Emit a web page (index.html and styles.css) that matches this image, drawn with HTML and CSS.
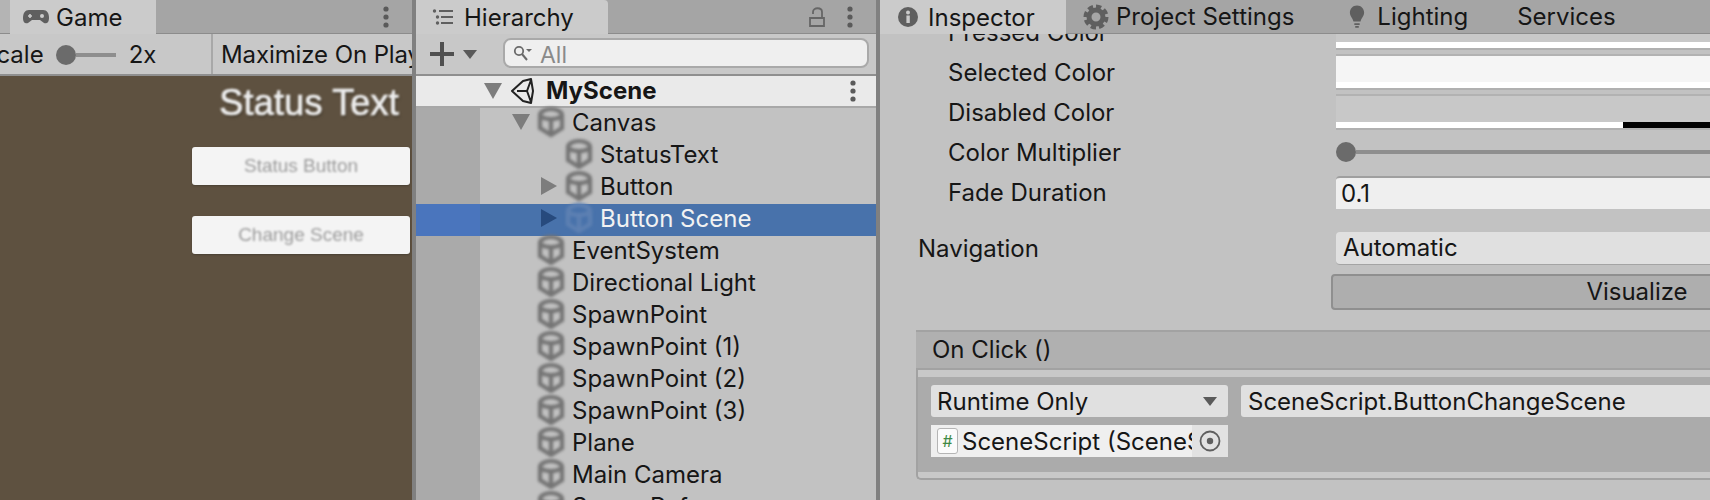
FILE: index.html
```html
<!DOCTYPE html>
<html lang="en">
<head>
    <meta charset="UTF-8">
    <title>Unity Editor</title>
    <link rel="stylesheet" href="styles.css">
</head>
<body>
    <svg class="sprites" width="0" height="0">
        <symbol id="cube" viewBox="0 0 28 32">
            <path d="M14 3 C20 3 25 6 25 9 V22 L14 29 L3 22 V9 C3 6 8 3 14 3 Z M3 10 C8 14 20 14 25 10 M14 13 V29" fill="none" stroke="currentColor" stroke-width="4.2"/>
        </symbol>
        <symbol id="kebab" viewBox="0 0 8 24">
            <circle cx="4" cy="4" r="2.6"/>
            <circle cx="4" cy="12" r="2.6"/>
            <circle cx="4" cy="20" r="2.6"/>
        </symbol>
    </svg>

    <!-- game view -->
    <section class="panel game">
        <div class="tabbar">
            <div class="tab-stub"></div>
            <div class="tab game-tab">
                <svg class="tab-icon" width="28" height="16" viewBox="0 0 28 16">
                    <path d="M7 1 H21 C25 1 27 4 27 9 C27 14 24 15 22 14 L18 11 H10 L6 14 C4 15 1 14 1 9 C1 4 3 1 7 1 Z" fill="#5f5f5f"/>
                    <path d="M6 7 H10 M8 5 V9" stroke="#cbcbcb" stroke-width="1.6"/>
                    <circle cx="20" cy="7" r="2" fill="#cbcbcb"/>
                </svg>
                Game
            </div>
            <div class="tabbar-tools">
                <svg class="kebab" width="8" height="24"><use href="#kebab"/></svg>
            </div>
        </div>
        <div class="toolbar game-toolbar">
            <div class="scale-group">
                <span class="scale-label">Scale</span>
                <div class="slider scale-slider"><span class="knob"></span><span class="track"></span></div>
                <span>2x</span>
            </div>
            <div class="maximize">Maximize On Play</div>
        </div>
        <div class="game-view">
            <div class="status-text">Status Text</div>
            <div class="game-button"><span class="game-button-text">Status Button</span></div>
            <div class="game-button"><span class="game-button-text">Change Scene</span></div>
        </div>
    </section>

    <!-- hierarchy -->
    <section class="panel hierarchy">
        <div class="tabbar">
            <div class="tab hierarchy-tab">
                <svg class="tab-icon" width="22" height="18" viewBox="0 0 22 18">
                    <path d="M7 3 H21 M9 9 H21 M9 15 H21" stroke="#5f5f5f" stroke-width="2"/>
                    <circle cx="2.5" cy="3" r="1.7" fill="#5f5f5f"/>
                    <circle cx="5.5" cy="9" r="1.7" fill="#5f5f5f"/>
                    <circle cx="5.5" cy="15" r="1.7" fill="#5f5f5f"/>
                </svg>
                Hierarchy
            </div>
            <div class="tabbar-tools">
                <svg class="lock" width="16" height="20" viewBox="0 0 16 20">
                    <path d="M1 11 H15 V19 H1 Z M4 7 V5 C4 0 13 0 13 5 V11" fill="none" stroke="#666666" stroke-width="1.8"/>
                </svg>
                <svg class="kebab" width="8" height="24"><use href="#kebab"/></svg>
            </div>
        </div>
        <div class="toolbar hierarchy-toolbar">
            <svg class="plus" width="24" height="24" viewBox="0 0 24 24">
                <path d="M0 12 H24 M12 0 V24" stroke="#505050" stroke-width="4"/>
            </svg>
            <span class="caret big-caret"></span>
            <div class="search">
                <svg width="20" height="16" viewBox="0 0 20 16">
                    <circle cx="6" cy="6" r="4.2" fill="none" stroke="#6a6a6a" stroke-width="1.8"/>
                    <path d="M9 9 L14 15" stroke="#6a6a6a" stroke-width="2"/>
                    <path d="M13 4 H19 L16 7 Z" fill="#6a6a6a"/>
                </svg>
                <span class="search-text">All</span>
            </div>
        </div>
        <div class="tree">
            <div class="row scene-row">
                <span class="arrow down"></span>
                <svg class="scene-icon" width="24" height="26" viewBox="0 0 24 26">
                    <path d="M2 13 L13 3 L21 1 L23 13 L21 25 L13 23 Z M7 13 H17 L21 2 M17 13 L21 24" fill="none" stroke="#222" stroke-width="2" stroke-linejoin="round"/>
                </svg>
                <span class="scene-name">MyScene</span>
                <svg class="kebab scene-kebab" width="8" height="24"><use href="#kebab"/></svg>
            </div>
            <div class="row d1"><span class="arrow down"></span><svg class="cube"><use href="#cube"/></svg>Canvas</div>
            <div class="row d2"><span class="arrow"></span><svg class="cube"><use href="#cube"/></svg>StatusText</div>
            <div class="row d2"><span class="arrow right"></span><svg class="cube"><use href="#cube"/></svg>Button</div>
            <div class="row d2 selected"><span class="arrow right"></span><svg class="cube"><use href="#cube"/></svg>Button Scene</div>
            <div class="row d1"><span class="arrow"></span><svg class="cube"><use href="#cube"/></svg>EventSystem</div>
            <div class="row d1"><span class="arrow"></span><svg class="cube"><use href="#cube"/></svg>Directional Light</div>
            <div class="row d1"><span class="arrow"></span><svg class="cube"><use href="#cube"/></svg>SpawnPoint</div>
            <div class="row d1"><span class="arrow"></span><svg class="cube"><use href="#cube"/></svg>SpawnPoint (1)</div>
            <div class="row d1"><span class="arrow"></span><svg class="cube"><use href="#cube"/></svg>SpawnPoint (2)</div>
            <div class="row d1"><span class="arrow"></span><svg class="cube"><use href="#cube"/></svg>SpawnPoint (3)</div>
            <div class="row d1"><span class="arrow"></span><svg class="cube"><use href="#cube"/></svg>Plane</div>
            <div class="row d1"><span class="arrow"></span><svg class="cube"><use href="#cube"/></svg>Main Camera</div>
            <div class="row d1"><span class="arrow"></span><svg class="cube"><use href="#cube"/></svg>Scene Ref</div>
        </div>
    </section>

    <!-- inspector -->
    <section class="panel inspector">
        <div class="tabbar">
            <div class="tab inspector-tab">
                <svg class="tab-icon" width="20" height="20" viewBox="0 0 20 20">
                    <circle cx="10" cy="10" r="10" fill="#5f5f5f"/>
                    <rect x="8.4" y="8.5" width="3.4" height="7.5" fill="#cbcbcb"/>
                    <circle cx="10" cy="5.4" r="2" fill="#cbcbcb"/>
                </svg>
                Inspector
            </div>
            <div class="plain-tab settings-tab">
                <svg class="tab-icon" width="26" height="26" viewBox="0 0 26 26">
                    <circle cx="13" cy="13" r="7" fill="none" stroke="#5f5f5f" stroke-width="5"/>
                    <circle cx="13" cy="13" r="10.5" fill="none" stroke="#5f5f5f" stroke-width="4" stroke-dasharray="5.2 3"/>
                </svg>
                Project Settings
            </div>
            <div class="plain-tab lighting-tab">
                <svg class="tab-icon" width="16" height="26" viewBox="0 0 18 26">
                    <path d="M9 0 C14 0 17 4 17 8 C17 12 14 14 13 18 H5 C4 14 1 12 1 8 C1 4 4 0 9 0 Z" fill="#5f5f5f"/>
                    <path d="M6 21 H12 M7 24 H11" stroke="#5f5f5f" stroke-width="2"/>
                </svg>
                Lighting
            </div>
            <div class="plain-tab services-tab">Services</div>
        </div>
        <div class="inspector-body">
            <div class="props">
                <div class="prop">
                    <div class="prop-label">Pressed Color</div>
                    <div class="swatch swatch-pressed"></div>
                </div>
                <div class="prop">
                    <div class="prop-label">Selected Color</div>
                    <div class="swatch swatch-selected"></div>
                </div>
                <div class="prop">
                    <div class="prop-label">Disabled Color</div>
                    <div class="swatch swatch-disabled"></div>
                </div>
                <div class="prop">
                    <div class="prop-label">Color Multiplier</div>
                    <div class="slider"><span class="knob"></span><span class="track"></span></div>
                </div>
                <div class="prop">
                    <div class="prop-label">Fade Duration</div>
                    <div class="number-field">0.1</div>
                </div>
            </div>
            <div class="nav-row">
                <div class="nav-label">Navigation</div>
                <div class="dropdown nav-dropdown">Automatic</div>
            </div>
            <div class="visualize">Visualize</div>
            <div class="event">
                <div class="event-head">On Click ()</div>
                <div class="event-body">
                    <div class="event-rows">
                        <div class="event-line">
                            <div class="dropdown runtime">Runtime Only<span class="caret"></span></div>
                            <div class="dropdown method">SceneScript.ButtonChangeScene</div>
                        </div>
                        <div class="object-field">
                            <span class="script-icon">#</span>
                            <span class="object-name">SceneScript (SceneScript)</span>
                            <span class="object-pick">
                                <svg width="22" height="22" viewBox="0 0 22 22">
                                    <circle cx="11" cy="11" r="9.5" fill="none" stroke="#5f5f5f" stroke-width="1.8"/>
                                    <circle cx="11" cy="11" r="3.2" fill="#5f5f5f"/>
                                </svg>
                            </span>
                        </div>
                    </div>
                </div>
            </div>
        </div>
    </section>
</body>
</html>
```

FILE: styles.css
```css
* {
    box-sizing: border-box;
}
body {
    margin: 0;
    width: 1710px;
    height: 500px;
    display: flex;
    overflow: hidden;
    background-color: #808080;
    font-family: Inter, "Noto Sans", sans-serif;
    font-size: 24px;
    color: #161616;
}
.sprites {
    position: absolute;
}
.panel {
    display: flex;
    flex-direction: column;
    height: 500px;
    overflow: hidden;
}
.game {
    width: 412px;
}
.hierarchy {
    width: 460px;
    margin-left: 4px;
    background-color: #c2c2c2;
}
.inspector {
    flex: 1;
    margin-left: 4px;
    min-width: 0;
    background-color: #c2c2c2;
}

/* tabs */
.tabbar {
    display: flex;
    flex: none;
    height: 34px;
    background-color: #a5a5a5;
    border-bottom: 1px solid #8c8c8c;
}
.tab {
    display: flex;
    align-items: center;
    height: 34px;
    background-color: #cbcbcb;
    white-space: nowrap;
}
.tab-stub {
    width: 10px;
    background-color: #b4b4b4;
}
.tab-icon {
    flex: none;
}
.game-tab {
    width: 146px;
    padding-left: 12px;
    gap: 6px;
}
.hierarchy-tab {
    width: 192px;
    padding-left: 16px;
    gap: 10px;
    border-top-right-radius: 4px;
}
.inspector-tab {
    width: 186px;
    padding-left: 18px;
    gap: 10px;
}
.plain-tab {
    display: flex;
    align-items: center;
    white-space: nowrap;
}
.settings-tab {
    margin-left: 17px;
    gap: 7px;
}
.lighting-tab {
    margin-left: 55px;
    gap: 12px;
}
.services-tab {
    margin-left: 49px;
}
.tabbar-tools {
    display: flex;
    align-items: center;
    justify-content: flex-end;
    flex: 1;
    padding-right: 22px;
    gap: 21px;
}
.kebab {
    fill: #5a5a5a;
}

/* toolbars */
.toolbar {
    display: flex;
    align-items: center;
    flex: none;
    height: 42px;
    background-color: #c8c8c8;
    border-bottom: 2px solid #8f8f8f;
    white-space: nowrap;
}
.scale-group {
    display: flex;
    align-items: center;
    flex: none;
    width: 211px;
    height: 100%;
}
.scale-label {
    margin-left: -19px;
}
.slider {
    display: flex;
    align-items: center;
    flex: 1;
}
.scale-slider {
    flex: none;
    width: 60px;
    margin: 2px 13px 0 12px;
}
.knob {
    flex: none;
    width: 20px;
    height: 20px;
    border-radius: 50%;
    background-color: #6b6b6b;
}
.track {
    flex: 1;
    height: 4px;
    background-color: #8e8e8e;
}
.maximize {
    height: 100%;
    padding: 6px 0 0 8px;
    border-left: 2px solid #a8a8a8;
    letter-spacing: -0.1px;
}
.hierarchy-toolbar {
    padding-left: 14px;
}
.caret {
    width: 0;
    height: 0;
    border-left: 7px solid transparent;
    border-right: 7px solid transparent;
    border-top: 9px solid #5a5a5a;
}
.big-caret {
    margin: 0 26px 0 9px;
}
.search {
    display: flex;
    align-items: center;
    gap: 7px;
    width: 366px;
    height: 30px;
    margin-bottom: 2px;
    padding-left: 8px;
    border: 2px solid #a9a9a9;
    border-radius: 8px;
    background-color: #efefef;
    color: #8a8a8a;
}
.search-text {
    font-size: 23px;
    padding-top: 3px;
}

/* game view */
.game-view {
    display: flex;
    flex-direction: column;
    align-items: flex-end;
    flex: 1;
    padding-right: 2px;
    background-color: #5e5140;
}
.status-text {
    margin: 5px 11px -1px 0;
    font-family: "Liberation Sans", Arial, sans-serif;
    font-size: 36px;
    line-height: 44px;
    letter-spacing: 0.2px;
    color: #eeeeee;
    -webkit-text-stroke: 0.7px #eeeeee;
    text-shadow: 1px 2px 2px #3c3428;
    filter: blur(0.8px);
}
.game-button {
    display: flex;
    align-items: center;
    justify-content: center;
    width: 218px;
    height: 38px;
    margin-top: 23px;
    border-radius: 3px;
    background-color: #f4f4f4;
    box-shadow: 0 1px 2px #4a4033;
    font-family: "Liberation Sans", Arial, sans-serif;
    font-size: 19px;
    color: #9c9c9c;
}
.game-button + .game-button {
    margin-top: 31px;
}
.game-button-text {
    filter: blur(0.8px);
}

/* hierarchy rows */
.tree {
    flex: 1;
    overflow: hidden;
}
.row {
    display: flex;
    align-items: center;
    height: 32px;
    padding-bottom: 4px;
    background: linear-gradient(to right, #aaaaaa 64px, #c2c2c2 64px);
    white-space: nowrap;
}
.scene-row {
    padding-bottom: 1px;
    padding-left: 63px;
    background: #eaeaea;
    border-bottom: 2px solid #a8a8a8;
}
.d1 {
    padding-left: 91px;
}
.d2 {
    padding-left: 119px;
}
.arrow {
    flex: none;
    width: 28px;
    display: flex;
    justify-content: center;
}
.arrow.down::before {
    content: "";
    border-left: 9px solid transparent;
    border-right: 9px solid transparent;
    border-top: 16px solid #7d7d7d;
}
.arrow.right::before {
    content: "";
    border-top: 9px solid transparent;
    border-bottom: 9px solid transparent;
    border-left: 16px solid #7d7d7d;
}
.cube {
    flex: none;
    width: 28px;
    height: 32px;
    margin: 0 7px 0 2px;
    overflow: visible;
    color: #747474;
    filter: blur(1.5px);
}
.scene-icon {
    flex: none;
    margin: 0 12px 0 3px;
}
.scene-name {
    flex: 1;
    font-weight: 700;
}
.scene-kebab {
    margin-right: 19px;
}
.selected {
    background: linear-gradient(to right, #4a75bd 64px, #4872ab 64px);
    color: #f2f2f2;
}
.selected .arrow::before {
    border-left-color: #274a7d;
}
.selected .cube {
    color: #5d80b2;
}

/* inspector */
.inspector-body {
    flex: 1;
    overflow: hidden;
}
.props {
    margin-top: -18px;
}
.prop {
    display: flex;
    align-items: center;
    height: 32px;
    margin-bottom: 8px;
    padding-left: 68px;
}
.prop-label {
    flex: none;
    width: 388px;
}
.swatch {
    flex: 1;
    height: 32px;
    box-shadow: 0 -2px 0 #b2b2b2, 0 2px 0 #b0b0b0;
}
.swatch-pressed {
    background: linear-gradient(#fff, #fff) bottom / 100% 6px no-repeat #c8c8c8;
}
.swatch-selected {
    background: linear-gradient(#fff, #fff) bottom / 100% 6px no-repeat #f5f5f5;
}
.swatch-disabled {
    background: linear-gradient(to right, #fff 287px, #000 287px) bottom / 100% 6px no-repeat #c8c8c8;
}
.number-field {
    flex: 1;
    height: 33px;
    padding-left: 5px;
    border-top: 2px solid #9f9f9f;
    border-top-left-radius: 4px;
    background-color: #efefef;
    line-height: 32px;
}
.nav-row {
    display: flex;
    align-items: center;
    height: 33px;
    margin-top: 24px;
    padding-left: 38px;
}
.nav-label {
    flex: none;
    width: 418px;
}
.dropdown {
    display: flex;
    align-items: center;
    background-color: #e0e0e0;
    white-space: nowrap;
}
.nav-dropdown {
    flex: 1;
    height: 33px;
    padding: 0 0 2px 7px;
    border-top-left-radius: 4px;
    border-bottom-left-radius: 4px;
    border-bottom: 1px solid #a4a4a4;
}
.visualize {
    width: 612px;
    height: 36px;
    margin: 9px 0 0 451px;
    border: 2px solid #8f8f8f;
    border-radius: 4px;
    background-color: #aeaeae;
    line-height: 32px;
    text-align: center;
}
.event {
    margin: 20px 0 0 36px;
}
.event-head {
    height: 40px;
    padding-left: 16px;
    border-top: 2px solid #a2a2a2;
    border-bottom: 2px solid #a2a2a2;
    background-color: #b0b0b0;
    line-height: 36px;
}
.event-body {
    height: 110px;
    padding: 7px 0 6px;
    border-bottom: 2px solid #a2a2a2;
    border-left: 2px solid #a2a2a2;
    border-bottom-left-radius: 5px;
    background-color: #c8c8c8;
}
.event-rows {
    height: 95px;
    padding: 8px 0 0 13px;
    background-color: #ababab;
}
.event-line {
    display: flex;
    gap: 13px;
}
.runtime {
    flex: none;
    justify-content: space-between;
    width: 297px;
    height: 32px;
    padding: 0 11px 0 6px;
    border-radius: 3px;
}
.method {
    flex: 1;
    height: 32px;
    padding-left: 7px;
    border-top-left-radius: 3px;
    border-bottom-left-radius: 3px;
}
.object-field {
    display: flex;
    align-items: center;
    width: 297px;
    height: 32px;
    margin-top: 8px;
    padding-left: 6px;
    background-color: #efefef;
}
.script-icon {
    flex: none;
    width: 21px;
    height: 26px;
    margin-right: 4px;
    border: 1px solid #b5b5b5;
    border-radius: 3px;
    background-color: #fbfbfb;
    color: #3f8a45;
    font-size: 16px;
    line-height: 24px;
    text-align: center;
}
.object-name {
    flex: 1;
    min-width: 0;
    overflow: hidden;
    white-space: nowrap;
}
.object-pick {
    display: flex;
    align-items: center;
    justify-content: center;
    flex: none;
    width: 36px;
    height: 32px;
    background-color: #e2e2e2;
}
```
